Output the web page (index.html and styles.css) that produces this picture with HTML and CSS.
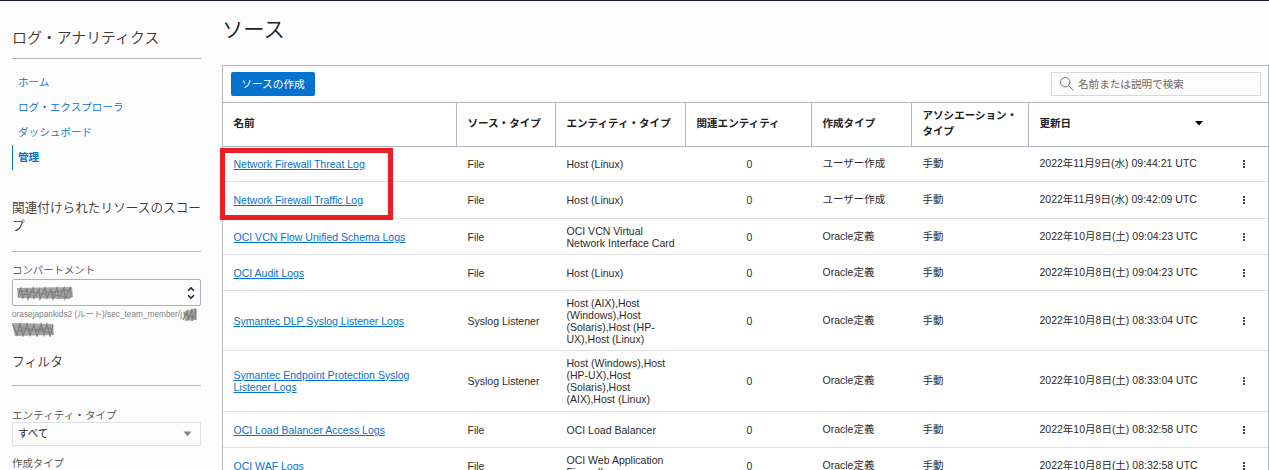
FILE: index.html
```html
<!DOCTYPE html>
<html lang="ja">
<head>
<meta charset="utf-8">
<title>ソース</title>
<link rel="stylesheet" href="styles.css">
</head>
<body>
<aside class="sidebar">
  <h2 class="service">ログ・アナリティクス</h2>
  <nav class="nav">
    <a>ホーム</a>
    <a>ログ・エクスプローラ</a>
    <a>ダッシュボード</a>
    <a class="active">管理</a>
  </nav>
  <h3 class="scope">関連付けられたリソースのスコープ</h3>
  <div class="label">コンパートメント</div>
  <div class="compartment">
    <svg class="scribble" width="58" height="16" viewBox="0 0 58 16"><path class="smudge" d="M1 3L56 2L57 12L53 14L2 13Z"/><path class="ink" d="M2 12L5 3L7 13L11 3L12 14L17 3L18 13L23 4L24 14L29 3L31 13L35 4L37 14L41 3L43 13L48 3L49 14L54 3L55 12M4 6L54 12M4 10L55 5"/></svg>
    <svg width="10" height="14" viewBox="0 0 10 14"><path class="chevron" d="M2 4.7L5 1.9L8 4.7M2 9.3L5 12.1L8 9.3"/></svg>
  </div>
  <div class="path"><span>orasejapankids2 (ルート)/sec_team_member/j</span><svg class="tail" width="15" height="14" viewBox="0 0 15 14"><path class="smudge" d="M1 4L14 0L14 12L3 13Z"/><path class="ink" d="M1 12L5 3L6 12L10 1L10 13L14 1L14 12M2 6L13 10"/></svg></div>
  <svg class="redacted" width="43" height="15" viewBox="0 0 43 15"><path class="smudge" d="M0 1L41 2L42 13L3 14Z"/><path class="ink" d="M1 3L5 13L8 2L11 14L15 2L18 13L22 3L25 14L29 2L32 13L35 2L38 14L41 3M3 9L40 6M6 5L41 11"/></svg>
  <h3 class="filter">フィルタ</h3>
  <div class="label entity">エンティティ・タイプ</div>
  <div class="select"><span>すべて</span><svg width="9" height="6" viewBox="0 0 9 6"><path class="caret" d="M.5.5H8.5L4.5 5.5Z"/></svg></div>
  <div class="label created">作成タイプ</div>
</aside>
<main class="main">
  <h1>ソース</h1>
  <section class="panel">
    <div class="toolbar">
      <button class="create">ソースの作成</button>
      <div class="search"><svg width="16" height="16" viewBox="0 0 16 16"><circle class="lens" cx="6.2" cy="6.2" r="4.7"/><path class="lens" d="M9.6 9.6L14.5 14.5"/></svg><span>名前または説明で検索</span></div>
    </div>
    <div class="row head">
      <div>名前</div><div>ソース・タイプ</div><div>エンティティ・タイプ</div><div>関連エンティティ</div><div>作成タイプ</div><div>アソシエーション・<br>タイプ</div><div class="sorted">更新日<svg width="8" height="5" viewBox="0 0 8 5"><path d="M0 0H8L4 4.6Z"/></svg></div>
    </div>
    <div class="row h35"><div><a>Network Firewall Threat Log</a></div><div>File</div><div>Host (Linux)</div><div class="num">0</div><div class="jp">ユーザー作成</div><div class="jp">手動</div><div class="jp date">2022年11月9日(水) 09:44:21 UTC</div><div class="menu"><i></i><i></i><i></i></div></div>
    <div class="row h37"><div><a>Network Firewall Traffic Log</a></div><div>File</div><div>Host (Linux)</div><div class="num">0</div><div class="jp">ユーザー作成</div><div class="jp">手動</div><div class="jp date">2022年11月9日(水) 09:42:09 UTC</div><div class="menu"><i></i><i></i><i></i></div></div>
    <div class="row h36"><div><a>OCI VCN Flow Unified Schema Logs</a></div><div>File</div><div>OCI VCN Virtual<br>Network Interface Card</div><div class="num">0</div><div class="jp">Oracle定義</div><div class="jp">手動</div><div class="jp date">2022年10月8日(土) 09:04:23 UTC</div><div class="menu"><i></i><i></i><i></i></div></div>
    <div class="row h36"><div><a>OCI Audit Logs</a></div><div>File</div><div>Host (Linux)</div><div class="num">0</div><div class="jp">Oracle定義</div><div class="jp">手動</div><div class="jp date">2022年10月8日(土) 09:04:23 UTC</div><div class="menu"><i></i><i></i><i></i></div></div>
    <div class="row h60"><div><a>Symantec DLP Syslog Listener Logs</a></div><div>Syslog Listener</div><div>Host (AIX),Host<br>(Windows),Host<br>(Solaris),Host (HP-<br>UX),Host (Linux)</div><div class="num">0</div><div class="jp">Oracle定義</div><div class="jp">手動</div><div class="jp date">2022年10月8日(土) 08:33:04 UTC</div><div class="menu"><i></i><i></i><i></i></div></div>
    <div class="row h61"><div><a>Symantec Endpoint Protection Syslog<br>Listener Logs</a></div><div>Syslog Listener</div><div>Host (Windows),Host<br>(HP-UX),Host<br>(Solaris),Host<br>(AIX),Host (Linux)</div><div class="num">0</div><div class="jp">Oracle定義</div><div class="jp">手動</div><div class="jp date">2022年10月8日(土) 08:33:04 UTC</div><div class="menu"><i></i><i></i><i></i></div></div>
    <div class="row h36"><div><a>OCI Load Balancer Access Logs</a></div><div>File</div><div>OCI Load Balancer</div><div class="num">0</div><div class="jp">Oracle定義</div><div class="jp">手動</div><div class="jp date">2022年10月8日(土) 08:32:58 UTC</div><div class="menu"><i></i><i></i><i></i></div></div>
    <div class="row h36"><div><a>OCI WAF Logs</a></div><div>File</div><div>OCI Web Application<br>Firewall</div><div class="num">0</div><div class="jp">Oracle定義</div><div class="jp">手動</div><div class="jp date">2022年10月8日(土) 08:32:58 UTC</div><div class="menu"><i></i><i></i><i></i></div></div>
  </section>
</main>
<div class="highlight"></div>
</body>
</html>
```
FILE: styles.css
```css
* { box-sizing: border-box; }
body {
  margin: 0;
  height: 470px;
  overflow: hidden;
  position: relative;
  display: flex;
  background: #fcfcfc;
  border-top: 1px solid #1b2330;
  font-family: "Liberation Sans", "Noto Sans CJK JP", sans-serif;
  font-size: 10.53px;
  line-height: 12px;
  color: #2d2b2a;
}
h1, h2, h3 { margin: 0; font-weight: 350; }
svg { display: block; flex: none; }

.sidebar { width: 189px; margin-left: 12px; flex: none; color: #3c3835; }
.service {
  height: 58px;
  padding-top: 26px;
  border-bottom: 1px solid #b0b6c0;
  font-size: 14.9px;
  line-height: 22px;
  white-space: nowrap;
}
.nav { padding-top: 11px; display: flex; flex-direction: column; }
.nav a {
  height: 25px;
  line-height: 25px;
  padding-left: 5px;
  border-left: 1px solid transparent;
  color: #0572ce;
  font-size: 10.6px;
  font-weight: 350;
  white-space: nowrap;
}
.nav .active { font-weight: 700; border-left-color: #0572ce; }
.scope {
  height: 82px;
  padding-top: 29px;
  border-bottom: 1px solid #b0b6c0;
  font-size: 12.65px;
  line-height: 18px;
}
.label { font-size: 10.4px; line-height: 14px; color: #504c49; font-weight: 350; white-space: nowrap; }
.scope + .label { margin-top: 12px; }
.compartment {
  height: 27px;
  margin-top: 1px;
  padding: 0 4px 0 3px;
  border: 1px solid #a9b1bd;
  border-radius: 2px;
  display: flex;
  align-items: center;
  justify-content: space-between;
}
.smudge { fill: #a5a5a5; }
.ink { fill: none; stroke: #808080; stroke-width: 1.2; }
.scribble, .tail, .redacted { filter: blur(.5px); }
.chevron { fill: none; stroke: #222; stroke-width: 1.5; }
.path { display: flex; height: 16px; font-size: 8.27px; line-height: 17px; color: #85817e; white-space: nowrap; }
.tail { margin-top: 2px; }
.filter { height: 49px; padding-top: 16px; border-bottom: 1px solid #b0b6c0; font-size: 12.8px; line-height: 18px; }
.entity { margin-top: 22px; font-size: 10.6px; }
.select {
  height: 24px;
  padding: 0 8px 0 5px;
  border: 1px solid #dfe1e4;
  border-radius: 1px;
  display: flex;
  align-items: center;
  justify-content: space-between;
  color: #222;
}
.select span { padding-bottom: 2px; }
.caret { fill: #85898f; }
.created { margin-top: 11px; }

.main { flex: none; width: 1047px; margin-left: 21px; }
h1 { height: 64px; padding-top: 14px; font-size: 21.3px; line-height: 30px; color: #222; }
.panel { background: #fff; border: 1px solid #b0b6c0; }
.toolbar { height: 36px; padding: 0 7px 0 8px; display: flex; align-items: center; justify-content: space-between; }
.create {
  width: 84px;
  height: 24px;
  padding: 1px 0 0;
  border: 0;
  border-radius: 2px;
  background: #0572ce;
  color: #fff;
  font: 400 10.7px/23px "Liberation Sans", "Noto Sans CJK JP", sans-serif;
}
.search {
  width: 210px;
  height: 24px;
  padding-left: 7px;
  display: flex;
  align-items: center;
  gap: 3px;
  border: 1px solid #d2dae2;
  background: #fcfcfc;
  color: #6d6a68;
  font-size: 10.6px;
}
.lens { fill: none; stroke: #777; stroke-width: 1; }
.row {
  display: grid;
  grid-template-columns: 234px 99px 130px 126px 100px 117px 203px 36px;
  border-bottom: 1px solid #dfe1e4;
}
.row > div { display: flex; align-items: center; padding-left: 10.5px; padding-top: 1px; white-space: nowrap; }
.row.h35 > div, .row.h37 > div, .row.h61 > div { padding-top: 0; padding-bottom: 1px; }
.row a { color: #0572ce; text-decoration: underline; }
.row > .jp { padding-top: 0; padding-bottom: 2px; font-size: 10.5px; }
.row.h35 > .jp, .row.h37 > .jp, .row.h61 > .jp { padding-bottom: 2px; }
.row > .num { justify-content: center; padding-left: 1px; }
.row > .menu { flex-direction: column; justify-content: center; gap: 1px; padding: 0 12px 0 0; }
.menu i { width: 2px; height: 2px; background: #3a4453; }
.head {
  height: 45px;
  border-top: 1px solid #b0b6c0;
  border-bottom-color: #b0b6c0;
  font-weight: 700;
  line-height: 16px;
  font-size: 10.55px;
  color: #222;
}
.row.head > div { border-right: 1px solid #b0b6c0; padding-top: 0; padding-bottom: 4px; }
.row.head > .sorted { border-right: 0; justify-content: space-between; padding-right: 29px; }
.sorted svg { margin-top: 2px; }
.h35 { height: 35px; }
.h36 { height: 36px; }
.h37 { height: 37px; }
.h60 { height: 60px; }
.h61 { height: 61px; }

/* Callout frame drawn over the first two sources */
.highlight { position: absolute; left: 220px; top: 147px; width: 173px; height: 72px; border: 5px solid #ee1c25; }
```
